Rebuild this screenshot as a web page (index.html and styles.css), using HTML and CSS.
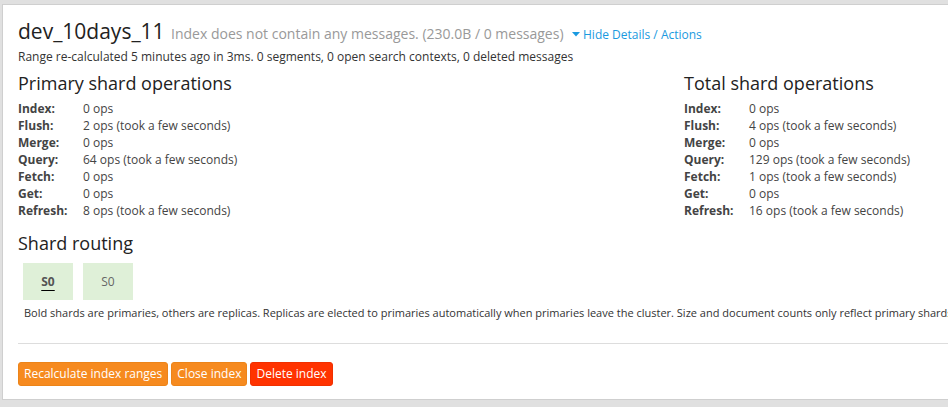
FILE: index.html
```html
<!DOCTYPE html>
<html>
<head>
<meta charset="utf-8">
<link rel="stylesheet" href="styles.css">
</head>
<body>
<div class="panel">
  <h2 class="title">dev_10days_11 <span class="sub">Index does not contain any messages. (230.0B / 0 messages)</span> <a class="toggle"><svg class="caret" width="8" height="5" viewBox="0 0 8 5"><path d="M0 0H8L4 4.5Z" fill="#1a9ae0"/></svg>Hide Details / Actions</a></h2>
  <p class="range">Range re-calculated 5 minutes ago in 3ms. 0 segments, 0 open search contexts, 0 deleted messages</p>

  <div class="ops">
    <div class="opcol">
      <h3>Primary shard operations</h3>
      <dl>
        <dt>Index:</dt><dd>0 ops</dd>
        <dt>Flush:</dt><dd>2 ops (took a few seconds)</dd>
        <dt>Merge:</dt><dd>0 ops</dd>
        <dt>Query:</dt><dd>64 ops (took a few seconds)</dd>
        <dt>Fetch:</dt><dd>0 ops</dd>
        <dt>Get:</dt><dd>0 ops</dd>
        <dt>Refresh:</dt><dd>8 ops (took a few seconds)</dd>
      </dl>
    </div>
    <div class="opcol">
      <h3>Total shard operations</h3>
      <dl>
        <dt>Index:</dt><dd>0 ops</dd>
        <dt>Flush:</dt><dd>4 ops (took a few seconds)</dd>
        <dt>Merge:</dt><dd>0 ops</dd>
        <dt>Query:</dt><dd>129 ops (took a few seconds)</dd>
        <dt>Fetch:</dt><dd>1 ops (took a few seconds)</dd>
        <dt>Get:</dt><dd>0 ops</dd>
        <dt>Refresh:</dt><dd>16 ops (took a few seconds)</dd>
      </dl>
    </div>
  </div>

  <h3 class="routing-title">Shard routing</h3>
  <div class="shards">
    <div class="shard primary"><span>S0</span></div>
    <div class="shard"><span>S0</span></div>
  </div>
  <p class="note">Bold shards are primaries, others are replicas. Replicas are elected to primaries automatically when primaries leave the cluster. Size and document counts only reflect primary shards.</p>

  <hr class="sep">

  <div class="actions">
    <button class="btn warn">Recalculate index ranges</button>
    <button class="btn warn">Close index</button>
    <button class="btn danger">Delete index</button>
  </div>
</div>
</body>
</html>
```

FILE: styles.css
```css
html, body {
  margin: 0;
  padding: 0;
}
body {
  background: #e0e0e0;
  font-family: "Open Sans", "DejaVu Sans", sans-serif;
  color: #333;
  overflow: hidden;
  width: 948px;
  height: 407px;
}
.panel {
  margin: 4px 0 0 2px;
  width: 1000px;
  height: 366px;
  background: #fff;
  border: 1px solid #cfcfcf;
  padding: 13px 15px 15px 15px;
  white-space: nowrap;
}
.title {
  margin: 0;
  font-size: 21px;
  font-weight: 400;
  line-height: 26px;
  color: #222;
}
.sub {
  font-size: 14px;
  color: #999;
  margin-left: 1px;
}
.toggle {
  font-size: 12px;
  color: #1a9ae0;
  margin-left: 3px;
}
.caret {
  margin-right: 3px;
  vertical-align: 2px;
}
.range {
  margin: 0;
  font-size: 12px;
  line-height: 17px;
}
.ops {
  display: grid;
  grid-template-columns: 666px 1fr;
  margin-top: 7px;
}
h3 {
  margin: 0;
  font-size: 18px;
  font-weight: 400;
  line-height: 22px;
  color: #222;
}
dl {
  display: grid;
  grid-template-columns: 65px 1fr;
  margin: 6px 0 0;
  font-size: 12px;
  line-height: 17px;
}
dt {
  font-weight: 700;
  color: #444;
}
dd {
  margin: 0;
  color: #444;
}
.routing-title {
  margin-top: 13px;
}
.shards {
  display: flex;
  gap: 10px;
  margin: 9px 5px 0;
}
.shard {
  width: 50px;
  height: 37px;
  background: #dff0d8;
  display: flex;
  align-items: center;
  justify-content: center;
  font-size: 12px;
  color: #666;
}
.shard.primary span {
  font-weight: 700;
  color: #555;
  text-decoration: underline;
  text-decoration-color: #000;
  text-underline-offset: 4px;
}
.note {
  margin: 5px 6px 0;
  font-size: 11px;
  line-height: 16px;
  color: #333;
}
.sep {
  margin: 22px 0 0;
  border: 0;
  border-top: 1px solid #ddd;
  height: 0;
}
.actions {
  margin-top: 18px;
  display: flex;
  gap: 3px;
}
.btn {
  font-family: "Open Sans", "DejaVu Sans", sans-serif;
  font-size: 12px;
  line-height: 18px;
  padding: 2px 5px;
  border: 1px solid transparent;
  border-radius: 3px;
  color: #fff;
}
.btn.warn {
  background: #f68a1f;
  border-color: #ec8419;
}
.btn.danger {
  background: #ff3300;
  border-color: #f03000;
}
```
